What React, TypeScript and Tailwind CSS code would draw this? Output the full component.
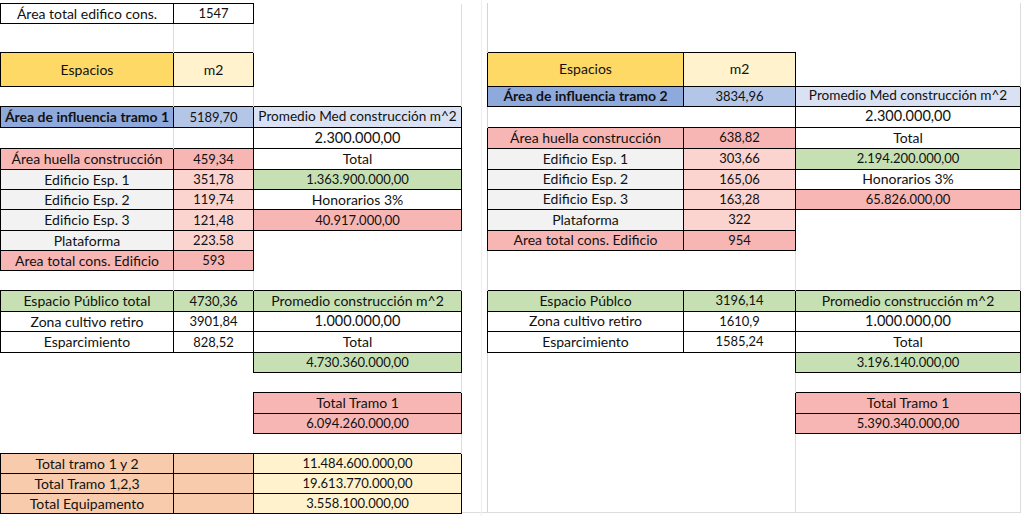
import React from 'react';

type Cell = {
  t?: string;
  bg?: string;
  b?: boolean; // black border
  bold?: boolean;
  size?: string;
  grid?: boolean; // faint gridline on the right
  gl?: boolean; // faint gridline on the left
};

type Row = { h: string; cells: Cell[] };

const GOLD = 'bg-[#ffd966]';
const CREAM = 'bg-[#fff2cc]';
const BLUE1 = 'bg-[#8ea9db]';
const BLUE2 = 'bg-[#b4c6e7]';
const BLUE3 = 'bg-[#d9e1f2]';
const PINK = 'bg-[#f7b6b4]';
const PINK2 = 'bg-[#fbd4d0]';
const GRAY = 'bg-[#f2f2f2]';
const GREEN = 'bg-[#c6e0b4]';
const PEACH = 'bg-[#f8cbad]';

const BIG = 'text-[14.5px]';
const MED = 'text-[13.6px]';

const E: Cell = {};
const G: Cell = { grid: true };
const L: Cell = { gl: true };

// Tramo 1 (columnas A-C)
const left: Row[] = [
  { h: 'h-[20px]', cells: [{ t: 'Área total edifico cons.', b: true }, { t: '1547', b: true }, G] },
  { h: 'h-[29px]', cells: [G, G, G] },
  { h: 'h-[34px]', cells: [{ t: 'Espacios', b: true, bg: GOLD }, { t: 'm2', b: true, bg: CREAM }, G] },
  { h: 'h-[20px]', cells: [G, G, G] },
  { h: 'h-[21px]', cells: [{ t: 'Área de influencia tramo 1', b: true, bg: BLUE1, bold: true }, { t: '5189,70', b: true, bg: BLUE2 }, { t: 'Promedio Med construcción m^2', b: true, bg: BLUE3, size: MED }] },
  { h: 'h-[21px]', cells: [G, E, { t: '2.300.000,00', b: true, size: BIG }] },
  { h: 'h-[21px]', cells: [{ t: 'Área huella construcción', b: true, bg: PINK }, { t: '459,34', b: true, bg: PINK }, { t: 'Total', b: true }] },
  { h: 'h-[20px]', cells: [{ t: 'Edificio Esp. 1', b: true, bg: GRAY }, { t: '351,78', b: true, bg: PINK2 }, { t: '1.363.900.000,00', b: true, bg: GREEN }] },
  { h: 'h-[20px]', cells: [{ t: 'Edificio Esp. 2', b: true, bg: GRAY }, { t: '119,74', b: true, bg: PINK2 }, { t: 'Honorarios 3%', b: true }] },
  { h: 'h-[21px]', cells: [{ t: 'Edificio Esp. 3', b: true, bg: GRAY }, { t: '121,48', b: true, bg: PINK2 }, { t: '40.917.000,00', b: true, bg: PINK }] },
  { h: 'h-[20px]', cells: [{ t: 'Plataforma', b: true, bg: GRAY }, { t: '223.58', b: true, bg: PINK2 }, G] },
  { h: 'h-[20px]', cells: [{ t: 'Area total cons. Edificio', b: true, bg: PINK }, { t: '593', b: true, bg: PINK }, G] },
  { h: 'h-[20px]', cells: [G, G, G] },
  { h: 'h-[21px]', cells: [{ t: 'Espacio Público total', b: true, bg: GREEN }, { t: '4730,36', b: true, bg: GREEN }, { t: 'Promedio construcción m^2', b: true, bg: GREEN }] },
  { h: 'h-[20px]', cells: [{ t: 'Zona cultivo retiro', b: true }, { t: '3901,84', b: true }, { t: '1.000.000,00', b: true, size: BIG }] },
  { h: 'h-[21px]', cells: [{ t: 'Esparcimiento', b: true }, { t: '828,52', b: true }, { t: 'Total', b: true }] },
  { h: 'h-[20px]', cells: [E, E, { t: '4.730.360.000,00', b: true, bg: GREEN }] },
  { h: 'h-[20px]', cells: [E, E, G] },
  { h: 'h-[21px]', cells: [E, E, { t: 'Total Tramo 1', b: true, bg: PINK }] },
  { h: 'h-[20px]', cells: [E, E, { t: '6.094.260.000,00', b: true, bg: PINK }] },
  { h: 'h-[20px]', cells: [E, E, G] },
  { h: 'h-[20px]', cells: [{ t: 'Total tramo 1 y 2', b: true, bg: PEACH }, { b: true, bg: PEACH }, { t: '11.484.600.000,00', b: true, bg: CREAM }] },
  { h: 'h-[20px]', cells: [{ t: 'Total Tramo 1,2,3', b: true, bg: PEACH }, { b: true, bg: PEACH }, { t: '19.613.770.000,00', b: true, bg: CREAM }] },
  { h: 'h-[20px]', cells: [{ t: 'Total Equipamento', b: true, bg: PEACH }, { b: true, bg: PEACH }, { t: '3.558.100.000,00', b: true, bg: CREAM }] },
];

// Tramo 2 (columnas D-F)
const right: Row[] = [
  { h: 'h-[20px]', cells: [L, E, G] },
  { h: 'h-[29px]', cells: [L, E, G] },
  { h: 'h-[34px]', cells: [{ t: 'Espacios', b: true, bg: GOLD }, { t: 'm2', b: true, bg: CREAM }, G] },
  { h: 'h-[20px]', cells: [{ t: 'Área de influencia tramo 2', b: true, bg: BLUE1, bold: true }, { t: '3834,96', b: true, bg: BLUE2 }, { t: 'Promedio Med construcción m^2', b: true, bg: BLUE3, size: MED }] },
  { h: 'h-[21px]', cells: [L, E, { t: '2.300.000,00', b: true, size: BIG }] },
  { h: 'h-[21px]', cells: [{ t: 'Área huella construcción', b: true, bg: PINK }, { t: '638,82', b: true, bg: PINK }, { t: 'Total', b: true }] },
  { h: 'h-[21px]', cells: [{ t: 'Edificio Esp. 1', b: true, bg: GRAY }, { t: '303,66', b: true, bg: PINK2 }, { t: '2.194.200.000,00', b: true, bg: GREEN }] },
  { h: 'h-[20px]', cells: [{ t: 'Edificio Esp. 2', b: true, bg: GRAY }, { t: '165,06', b: true, bg: PINK2 }, { t: 'Honorarios 3%', b: true }] },
  { h: 'h-[20px]', cells: [{ t: 'Edificio Esp. 3', b: true, bg: GRAY }, { t: '163,28', b: true, bg: PINK2 }, { t: '65.826.000,00', b: true, bg: PINK }] },
  { h: 'h-[21px]', cells: [{ t: 'Plataforma', b: true, bg: GRAY }, { t: '322', b: true, bg: PINK2 }, G] },
  { h: 'h-[20px]', cells: [{ t: 'Area total cons. Edificio', b: true, bg: PINK }, { t: '954', b: true, bg: PINK }, G] },
  { h: 'h-[20px]', cells: [L, G, G] },
  { h: 'h-[20px]', cells: [L, G, G] },
  { h: 'h-[21px]', cells: [{ t: 'Espacio Públco', b: true, bg: GREEN }, { t: '3196,14', b: true, bg: GREEN }, { t: 'Promedio construcción m^2', b: true, bg: GREEN }] },
  { h: 'h-[20px]', cells: [{ t: 'Zona cultivo retiro', b: true }, { t: '1610,9', b: true }, { t: '1.000.000,00', b: true, size: BIG }] },
  { h: 'h-[21px]', cells: [{ t: 'Esparcimiento', b: true }, { t: '1585,24', b: true }, { t: 'Total', b: true }] },
  { h: 'h-[20px]', cells: [L, E, { t: '3.196.140.000,00', b: true, bg: GREEN }] },
  { h: 'h-[20px]', cells: [L, G, G] },
  { h: 'h-[21px]', cells: [L, E, { t: 'Total Tramo 1', b: true, bg: PINK }] },
  { h: 'h-[20px]', cells: [L, E, { t: '5.390.340.000,00', b: true, bg: PINK }] },
  { h: 'h-[20px]', cells: [L, G, G] },
  { h: 'h-[20px]', cells: [L, G, G] },
  { h: 'h-[20px]', cells: [L, G, G] },
  { h: 'h-[19px]', cells: [L, G, G] },
];

const isNumber = (t?: string) => !!t && /^[\d.,]+$/.test(t);

function Sheet({ rows, cols, width }: { rows: Row[]; cols: number[]; width: string }) {
  return (
    <table className={`table-fixed border-collapse ${width}`}>
      <colgroup>
        {cols.map((w, i) => (
          <col key={i} style={{ width: w }} />
        ))}
      </colgroup>
      <tbody>
        {rows.map((r, i) => (
          <tr key={i} className={r.h}>
            {r.cells.map((c, j) => (
              <td
                key={j}
                className={[
                  'p-0 text-center whitespace-nowrap overflow-hidden leading-none text-[#111]',
                  c.bg ?? '',
                  c.b
                    ? 'border border-black'
                    : c.grid
                    ? 'border-r border-[#dcdcdc]'
                    : c.gl
                    ? 'border-l border-[#d4d4d4]'
                    : '',
                  c.bold ? 'font-bold' : '',
                  c.size ?? (isNumber(c.t) ? 'text-[13px]' : 'text-[14px]'),
                ].join(' ')}
              >
                {c.t}
              </td>
            ))}
          </tr>
        ))}
      </tbody>
    </table>
  );
}

export default function App() {
  return (
    <div className="w-[1023px] h-[520px] bg-white overflow-hidden font-['Lato','Liberation_Sans',sans-serif]">
      <div className="flex items-start pt-[3px] h-[513px] border-b border-[#dcdcdc] w-[1021px]">
        <Sheet rows={left} cols={[173, 80, 208]} width="w-[461px]" />
        {/* columna vacía entre los dos tramos */}
        <div className="flex w-[25px] -mt-[3px] h-[516px]">
          <div className="w-[20px] border-r border-[#efefef]" />
        </div>
        <Sheet rows={right} cols={[196, 112, 225]} width="w-[533px]" />
      </div>
    </div>
  );
}
